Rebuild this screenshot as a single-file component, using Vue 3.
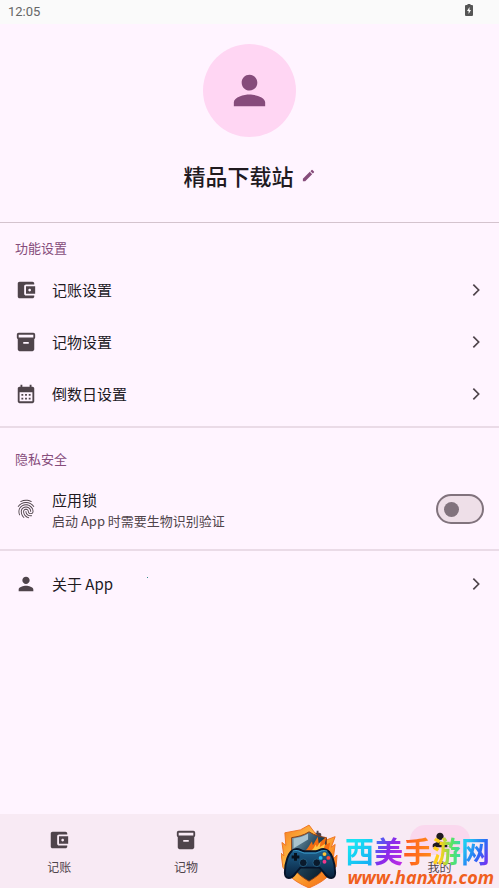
<script setup>
import { ref } from 'vue'

const locked = ref(false)

const icons = {
  wallet: 'M21 18v1c0 1.100-.9 2-2 2H5c-1.110 0-2-.9-2-2V5c0-1.100.89-2 2-2h14c1.100 0 2 .9 2 2v1h-9c-1.110 0-2 .9-2 2v8c0 1.100.89 2 2 2h9zm-9-2h10V8H12v8zm4-2.500c-.83 0-1.500-.67-1.500-1.500s.67-1.500 1.500-1.500 1.500.67 1.500 1.500-.67 1.500-1.500 1.500z',
  box: 'M20 2H4c-1 0-2 .9-2 2v3.010c0 .72.43 1.340 1 1.690V20c0 1.100 1.100 2 2 2h14c.9 0 2-.9 2-2V8.700c.57-.35 1-.97 1-1.690V4c0-1.100-1-2-2-2zm-5 12H9v-2h6v2zm5-7H4V4h16v3z',
  calendar: 'M19 4h-1V2h-2v2H8V2H6v2H5c-1.110 0-2 .9-2 2v14c0 1.100.89 2 2 2h14c1.100 0 2-.9 2-2V6c0-1.100-.9-2-2-2zm0 16H5V10h14v10zM7 12h2v2H7zm4 0h2v2h-2zm4 0h2v2h-2zm-8 4h2v2H7zm4 0h2v2h-2zm4 0h2v2h-2z',
  person: 'M12 12c2.210 0 4-1.790 4-4s-1.790-4-4-4-4 1.790-4 4 1.790 4 4 4zm0 2c-2.670 0-8 1.340-8 4v2h16v-2c0-2.660-5.330-4-8-4z',
  edit: 'M3 17.250V21h3.750L17.810 9.940l-3.750-3.750L3 17.250zM20.710 7.040a1 1 0 0 0 0-1.410l-2.340-2.340a1 1 0 0 0-1.410 0l-1.830 1.830 3.750 3.750 1.830-1.830z',
  chevron: 'M8 4 16 12l-8 8',
  finger: 'M17.810 4.470c-.08 0-.16-.02-.23-.06C15.660 3.420 14 3 12.010 3c-1.980 0-3.860.47-5.570 1.410-.24.13-.54.04-.68-.2-.13-.24-.04-.55.2-.68C7.820 2.520 9.860 2 12.010 2c2.130 0 3.990.47 6.030 1.520.25.13.34.43.21.67-.09.18-.26.28-.44.28zM3.500 9.720c-.1 0-.2-.03-.29-.09-.23-.16-.28-.47-.12-.7.99-1.400 2.250-2.500 3.750-3.270C9.980 4.040 14 4.030 17.150 5.650c1.500.77 2.760 1.860 3.750 3.250.16.22.11.54-.12.7-.23.16-.54.11-.7-.12-.9-1.260-2.040-2.250-3.390-2.940-2.870-1.470-6.540-1.470-9.400.01-1.360.7-2.500 1.700-3.400 2.960-.08.14-.23.21-.39.21zm6.250 12.070c-.13 0-.26-.05-.35-.15-.87-.87-1.340-1.430-2.010-2.640-.69-1.230-1.050-2.730-1.050-4.340 0-2.970 2.540-5.390 5.660-5.390s5.660 2.420 5.660 5.390c0 .28-.22.5-.5.5s-.5-.22-.5-.5c0-2.420-2.090-4.390-4.660-4.390-2.570 0-4.660 1.970-4.660 4.390 0 1.440.32 2.770.93 3.850.64 1.150 1.080 1.640 1.850 2.420.19.2.19.51 0 .71-.11.1-.24.15-.37.15zm7.170-1.850c-1.190 0-2.240-.3-3.100-.89-1.490-1.010-2.380-2.650-2.380-4.390 0-.28.22-.5.5-.5s.5.22.5.5c0 1.410.72 2.740 1.940 3.560.71.48 1.540.71 2.540.71.24 0 .64-.03 1.040-.1.27-.05.53.13.58.41.05.27-.13.53-.41.58-.57.11-1.070.12-1.210.12zM14.910 22c-.04 0-.09-.01-.13-.02-1.590-.44-2.630-1.030-3.720-2.100-1.400-1.390-2.170-3.240-2.170-5.220 0-1.620 1.380-2.940 3.080-2.940 1.700 0 3.080 1.320 3.080 2.940 0 1.070.93 1.940 2.080 1.940s2.080-.87 2.080-1.940c0-3.770-3.250-6.830-7.250-6.830-2.840 0-5.440 1.580-6.610 4.030-.39.81-.59 1.760-.59 2.800 0 .78.07 2.010.67 3.610.1.26-.03.55-.29.64-.26.1-.55-.04-.64-.29-.49-1.310-.73-2.610-.73-3.960 0-1.200.23-2.290.68-3.240 1.330-2.790 4.280-4.600 7.510-4.600 4.550 0 8.250 3.510 8.250 7.830 0 1.620-1.380 2.940-3.080 2.940s-3.080-1.320-3.080-2.940c0-1.070-.93-1.940-2.080-1.940s-2.080.87-2.080 1.940c0 1.710.66 3.310 1.870 4.510.95.94 1.860 1.460 3.270 1.850.27.07.42.35.35.61-.05.23-.26.38-.47.38z'
}

const features = [
  { label: '记账设置', icon: icons.wallet },
  { label: '记物设置', icon: icons.box },
  { label: '倒数日设置', icon: icons.calendar }
]

const tabs = [
  { label: '记账', icon: icons.wallet },
  { label: '记物', icon: icons.box },
  { label: '', name: '倒数日', icon: icons.calendar },
  { label: '我的', icon: icons.person, active: true }
]
</script>

<template>
  <div class="screen">
    <header class="status">
      <span>12:05</span>
      <svg class="battery" viewBox="0 0 8 12"><path fill="#555" d="M2.500 0h3v1H7q1 0 1 1v9q0 1-1 1H1q-1 0-1-1V2q0-1 1-1h1.500z" /><path fill="#fff" d="M4.500 3 2 7h1.600v3L6 6H4.500z" /></svg>
    </header>

    <main class="content">
      <section class="profile">
        <div class="avatar"><svg viewBox="0 0 24 24"><path :d="icons.person" /></svg></div>
        <button class="name" type="button">
          <span>精品下载站</span>
          <svg viewBox="0 0 24 24"><path :d="icons.edit" /></svg>
        </button>
      </section>

      <section class="group features">
        <h2>功能设置</h2>
        <button v-for="item in features" :key="item.label" class="row" type="button">
          <svg class="icon" viewBox="0 0 24 24"><path :d="item.icon" /></svg>
          <span class="label">{{ item.label }}</span>
          <svg class="chevron" viewBox="0 0 24 24"><path :d="icons.chevron" /></svg>
        </button>
      </section>

      <section class="group privacy">
        <h2>隐私安全</h2>
        <label class="row lock">
          <svg class="icon" viewBox="0 0 24 24"><path :d="icons.finger" /></svg>
          <span class="text">
            <span class="label">应用锁</span>
            <span class="hint">启动 App 时需要生物识别验证</span>
          </span>
          <input v-model="locked" class="switch" type="checkbox" role="switch" />
        </label>
      </section>

      <section class="group about">
        <button class="row" type="button">
          <svg class="icon" viewBox="0 0 24 24"><path :d="icons.person" /></svg>
          <span class="label">关于 App</span>
          <svg class="chevron" viewBox="0 0 24 24"><path :d="icons.chevron" /></svg>
        </button>
        <i class="speck"></i>
      </section>
    </main>

    <nav class="tabs">
      <button v-for="(tab, i) in tabs" :key="i" class="tab" :class="{ active: tab.active }" type="button" :aria-label="tab.name">
        <span class="pill"><svg viewBox="0 0 24 24"><path :d="tab.icon" /></svg></span>
        <span class="tab-label">{{ tab.label }}</span>
      </button>
    </nav>

    <aside class="brand">
      <svg class="shield" viewBox="0 0 60 66">
        <defs>
          <linearGradient id="flame" x1="0" y1="0" x2="1" y2="1"><stop offset="0" stop-color="#f47a1c" /><stop offset=".4" stop-color="#ffc04a" /><stop offset=".7" stop-color="#f98a22" /><stop offset="1" stop-color="#f0641a" /></linearGradient>
          <linearGradient id="steel" x1="0" y1="0" x2="1" y2="1"><stop offset="0" stop-color="#86a9bc" /><stop offset=".5" stop-color="#1d4055" /><stop offset="1" stop-color="#07131f" /></linearGradient>
          <linearGradient id="pad" x1="0" y1="0" x2="0" y2="1"><stop offset="0" stop-color="#1f6390" /><stop offset="1" stop-color="#08203c" /></linearGradient>
        </defs>
        <path fill="url(#flame)" stroke="#ef7423" d="M29 1 20 6 4 9l1 13-4-3 2 14-3-3 2 15 4 4c4 8 14 13 23 17 9-4 19-9 23-17l5-5 1-12-4 4 2-15-4 3 4-11-8 3-10-3z" />
        <path fill="url(#steel)" stroke="#8a3b14" d="M29 8c-6 4-12 5-18 6v24c0 9 9 16 18 21 9-5 18-12 18-21V14c-6-1-12-2-18-6z" />
        <path fill="#a9c3cf" d="M28 10c-5 3-10 4-15 5v10l15-9z" />
        <path fill="#f26d12" d="M24 28c4-2 5-6 8-10l1 4 5-9 1 7 8-7-2 9 6-3-3 14H26z" />
        <path fill="#ffc545" d="M30 28c4-2 4-4 6-7l1 3 4-6-1 6 6-4-3 9H31z" />
        <path fill="url(#pad)" stroke="#06142a" stroke-width="2" d="M15 26c4-1 6 2 9 2h12c3 0 5-3 9-2 8 1 11 16 11 24 0 8-7 7-11 1l-5-6H20l-5 6c-4 6-11 7-11-1 0-8 3-23 11-24z" />
        <path fill="none" stroke="#3c9bca" d="M12 28c5-2 8 1 12 2h12c4-1 7-4 12-2" />
        <circle cx="23" cy="40" r="4" fill="#0a1a2c" stroke="#235c80" /><circle cx="37" cy="40" r="4" fill="#0a1a2c" stroke="#235c80" />
        <path stroke="#07111d" stroke-width="3" d="M15 30v8M11 34h8" />
        <circle cx="45" cy="31" r="2" fill="#ffc535" /><circle cx="41" cy="35" r="2" fill="#29b9f1" /><circle cx="49" cy="35" r="2" fill="#ff4639" /><circle cx="45" cy="39" r="2" fill="#f2378c" />
      </svg>
      <div class="wordmark">
        <div class="hanzi"><span class="c1">西</span><span class="c2">美</span><span class="c3">手</span><span class="c4">游</span><span class="c5">网</span></div>
        <div class="url">www.hanxm.com</div>
      </div>
    </aside>
  </div>
</template>

<style>
body { margin: 0; background: #fff4ff; }
</style>

<style scoped>
* { box-sizing: border-box; }
.screen { position: relative; display: flex; flex-direction: column; min-height: 100vh; overflow-x: clip; background: #fff4ff; color: #211a1f; font-family: "Noto Sans CJK SC", "Noto Sans", sans-serif; }
button { border: 0; background: none; color: inherit; font: inherit; padding: 0; text-align: left; cursor: pointer; }
svg { display: block; flex: none; }
.status { display: flex; align-items: center; justify-content: space-between; height: 24px; padding: 0 26px 1px 8px; background: #fafafa; color: #666; font: 400 13px/20px Roboto, sans-serif; }
.battery { width: 8px; height: 12px; margin-bottom: 3px; }
.content { flex: 1; }
.profile { display: flex; flex-direction: column; align-items: center; padding: 20px 0 30px; gap: 22px; }
.avatar { display: grid; place-items: center; width: 93px; height: 93px; border-radius: 50%; background: #ffd6f3; }
.avatar svg { width: 47px; height: 47px; fill: #864c7b; }
.name { display: flex; align-items: center; gap: 7px; font-size: 22px; line-height: 33px; font-weight: 500; }
.name svg { width: 15px; height: 15px; fill: #864c7b; }
.group { border-top: 1px solid #d4c3ce; }
h2 { margin: 0; padding: 0 15px; font-size: 13px; line-height: 20px; font-weight: 400; color: #864c7b; }
.features { padding: 15px 0 6px; }
.features h2 { padding-bottom: 6px; }
.privacy { padding: 21px 0 0; border-width: 2px; border-color: #eadbe7; }
.about { position: relative; padding: 7px 0; border-width: 2px; border-color: #eadbe7; }
.speck { position: absolute; left: 147px; top: 26px; width: 1px; height: 1px; background: #2d8a8a; }
.row { display: flex; align-items: center; width: 100%; min-height: 52px; padding: 0 15px; gap: 15px; }
.icon { width: 22px; height: 22px; fill: #4f444b; }
.label { flex: 1; font-size: 15px; line-height: 22px; }
.chevron { width: 16px; height: 16px; fill: none; stroke: #4f444b; stroke-width: 2.500; }
.lock { min-height: 80px; }
.text { display: flex; flex: 1; flex-direction: column; }
.hint { font-size: 13px; line-height: 19px; color: #4f444b; }
.switch { appearance: none; display: flex; align-items: center; width: 48px; height: 30px; margin: 0; padding: 0 6px; border: 2px solid #81737d; border-radius: 15px; background: #eedfe8; }
.switch::before { content: ""; width: 15px; height: 15px; border-radius: 50%; background: #81737d; }
.switch:checked { justify-content: flex-end; }
.tabs { display: flex; height: 74px; margin: 0 -4px; background: #f8eaf4; }
.tab { display: flex; flex: 1; flex-direction: column; align-items: center; padding-top: 11px; gap: 4px; color: #4f444b; }
.pill { display: grid; place-items: center; width: 60px; height: 30px; border-radius: 15px; }
.pill svg { width: 22px; height: 22px; fill: #4f444b; }
.active .pill { background: #fad8ee; }
.active .pill svg { fill: #211a1f; }
.tab-label { font-size: 12px; line-height: 16px; }
.brand { position: absolute; right: 5px; bottom: 0; display: flex; align-items: flex-end; gap: 6px; pointer-events: none; }
.shield { width: 58px; height: 64px; }
.wordmark { display: flex; flex-direction: column; align-items: flex-end; }
.hanzi { display: flex; padding-right: 4px; font-size: 29px; line-height: 32px; font-weight: 700; }
.hanzi span { color: transparent; background-clip: text; }
.c1 { background-image: linear-gradient(135deg, #18e2f3 30%, #16a4f5); }
.c2 { background-image: linear-gradient(120deg, #2c7cf7, #8a2bea 50%, #c62be2); }
.c3 { background-image: linear-gradient(90deg, #ff5a20, #ff8a19); }
.c4 { background-image: linear-gradient(90deg, #ffd01a 30%, #55e36a 70%, #35d8b0); }
.c5 { background-image: linear-gradient(120deg, #20cdf2 20%, #2a6cf5 60%, #8b20f1); }
.url { font: italic 700 18px/22px "Open Sans", sans-serif; color: #f0601d; }
</style>
